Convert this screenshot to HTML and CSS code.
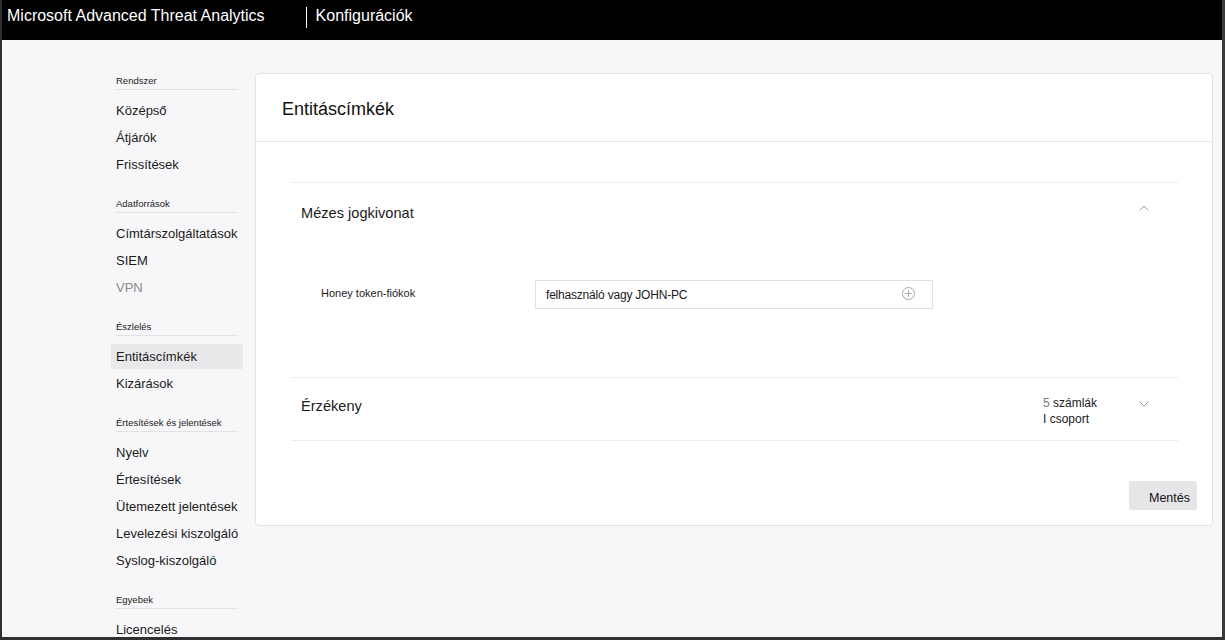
FILE: index.html
```html
<!DOCTYPE html>
<html lang="hu">
<head>
<meta charset="utf-8">
<title>Konfigurációk</title>
<link rel="stylesheet" href="styles.css">
</head>
<body>
<div class="frame">
  <header class="topbar">
    <span class="brand">Microsoft Advanced Threat Analytics</span>
    <span class="divider"></span>
    <span class="page-title">Konfigurációk</span>
  </header>
  <div class="main">
    <nav class="sidebar">
      <div class="group">
        <div class="group-label">Rendszer</div>
        <ul class="items">
          <li class="item">Középső</li>
          <li class="item">Átjárók</li>
          <li class="item">Frissítések</li>
        </ul>
      </div>
      <div class="group">
        <div class="group-label">Adatforrások</div>
        <ul class="items">
          <li class="item">Címtárszolgáltatások</li>
          <li class="item">SIEM</li>
          <li class="item disabled">VPN</li>
        </ul>
      </div>
      <div class="group">
        <div class="group-label">Észlelés</div>
        <ul class="items">
          <li class="item active">Entitáscímkék</li>
          <li class="item">Kizárások</li>
        </ul>
      </div>
      <div class="group">
        <div class="group-label">Értesítések és jelentések</div>
        <ul class="items">
          <li class="item">Nyelv</li>
          <li class="item">Értesítések</li>
          <li class="item">Ütemezett jelentések</li>
          <li class="item">Levelezési kiszolgáló</li>
          <li class="item">Syslog-kiszolgáló</li>
        </ul>
      </div>
      <div class="group">
        <div class="group-label">Egyebek</div>
        <ul class="items">
          <li class="item">Licencelés</li>
        </ul>
      </div>
    </nav>
    <section class="card">
      <div class="card-header">
        <h1 class="card-title">Entitáscímkék</h1>
      </div>
      <div class="card-body">
        <div class="sections">
          <div class="acc acc-open">
            <div class="acc-head">
              <span class="acc-title">Mézes jogkivonat</span>
              <svg class="chev chev-up" width="10" height="6" viewBox="0 0 10 6"><path d="M0.5 5.5 L5 1 L9.5 5.5" fill="none" stroke="#9a9a9a" stroke-width="1"/></svg>
            </div>
            <div class="acc-body">
              <div class="field-row">
                <label class="field-label">Honey token-fiókok</label>
                <div class="input">
                  <span class="placeholder">felhasználó vagy JOHN-PC</span>
                  <svg class="plus" width="13" height="13" viewBox="0 0 13 13"><circle cx="6.5" cy="6.5" r="6" fill="none" stroke="#a8a8a8" stroke-width="1"/><path d="M6.5 3.2 V9.8 M3.2 6.5 H9.8" stroke="#a8a8a8" stroke-width="1"/></svg>
                </div>
              </div>
            </div>
          </div>
          <div class="acc acc-closed">
            <div class="acc-head">
              <span class="acc-title">Érzékeny</span>
              <div class="meta">
                <div><span class="num">5</span> számlák</div>
                <div>I csoport</div>
              </div>
              <svg class="chev chev-down" width="10" height="6" viewBox="0 0 10 6"><path d="M0.5 0.5 L5 5 L9.5 0.5" fill="none" stroke="#9a9a9a" stroke-width="1"/></svg>
            </div>
          </div>
        </div>
        <div class="actions">
          <button class="btn">Mentés</button>
        </div>
      </div>
    </section>
  </div>
</div>
</body>
</html>
```

FILE: styles.css
```css
* { box-sizing: border-box; }
html, body { margin: 0; padding: 0; }
body {
  font-family: "Liberation Sans", Arial, sans-serif;
  color: #1b1b1b;
  background: #f7f7f9;
}
.frame {
  width: 1225px;
  height: 640px;
  overflow: hidden;
  border-left: 2px solid #303030;
  border-right: 3px solid #3a3a3a;
  border-bottom: 3px solid #303030;
  background: #f7f7f9;
}
.topbar {
  height: 40px;
  background: #000;
  color: #fff;
  display: flex;
  align-items: flex-start;
  padding: 6px 0 0 5px;
  font-size: 16px;
  line-height: 20px;
}
.divider {
  width: 1px;
  height: 21px;
  background: #fff;
  margin: 1px 9px 0 41px;
}
.main {
  display: flex;
  align-items: flex-start;
  padding: 33px 9px 0 109px;
}
.sidebar {
  width: 132px;
  flex: none;
  padding-top: 2px;
}
.group { margin-bottom: 21px; }
.group-label {
  font-size: 9.5px;
  line-height: 12px;
  padding-bottom: 2px;
  margin: 0 5px;
  border-bottom: 1px solid #e2e2e4;
  color: #1b1b1b;
}
.items {
  list-style: none;
  margin: 8px 0 0;
  padding: 0;
}
.item {
  font-size: 13px;
  height: 25px;
  line-height: 25px;
  margin: 0 0 2px;
  padding: 0 5px;
  white-space: nowrap;
}
.item.disabled { color: #8a8a8a; }
.item.active { background: #e9e9eb; }
.card {
  flex: 1;
  margin-left: 12px;
  background: #fff;
  border: 1px solid #e3e3e5;
  border-radius: 4px;
}
.card-header {
  height: 68px;
  display: flex;
  align-items: center;
  padding: 3px 0 0 26px;
  border-bottom: 1px solid #e6e6e8;
}
.card-title {
  margin: 0;
  font-size: 18px;
  font-weight: normal;
  color: #111;
}
.card-body {
  padding: 40px 15px 15px 35px;
}
.sections { margin-right: 19px; }
.acc { border-top: 1px solid #ececee; }
.acc-closed { border-bottom: 1px solid #ececee; }
.acc-head {
  display: flex;
  align-items: center;
  padding: 0 29px 0 10px;
  font-size: 14.6px;
}
.acc-open .acc-head { height: 59px; }
.acc-closed .acc-head { height: 62px; padding-left: 10px; }
.acc-closed .acc-title { margin-top: -7px; }
.acc-title { flex: 1; color: #1b1b1b; }
.chev { flex: none; display: block; }
.chev-up { margin-top: -10px; }
.chev-down { margin-top: -10px; }
.meta {
  width: 96px;
  font-size: 12px;
  line-height: 16px;
  color: #1b1b1b;
  margin-top: 3px;
}
.meta .num { color: #777; }
.acc-body {
  padding: 38px 0 68px 30px;
}
.field-row {
  display: flex;
  align-items: flex-start;
}
.field-label {
  width: 214px;
  flex: none;
  font-size: 11px;
  line-height: 14px;
  padding-top: 6px;
}
.input {
  width: 398px;
  height: 29px;
  border: 1px solid #e0e0e2;
  display: flex;
  align-items: center;
  padding: 1px 17px 0 10px;
}
.placeholder {
  flex: 1;
  font-size: 12px;
  color: #1b1b1b;
  letter-spacing: -0.2px;
}
.plus { display: block; flex: none; margin-top: -4px; }
.actions {
  display: flex;
  justify-content: flex-end;
  margin-top: 40px;
}
.btn {
  width: 68px;
  height: 29px;
  border: none;
  border-radius: 2px;
  background: #e6e6e8;
  font-family: "Liberation Sans", Arial, sans-serif;
  font-size: 12.5px;
  color: #111;
  text-align: right;
  padding: 4px 7px 0 0;
}
```
